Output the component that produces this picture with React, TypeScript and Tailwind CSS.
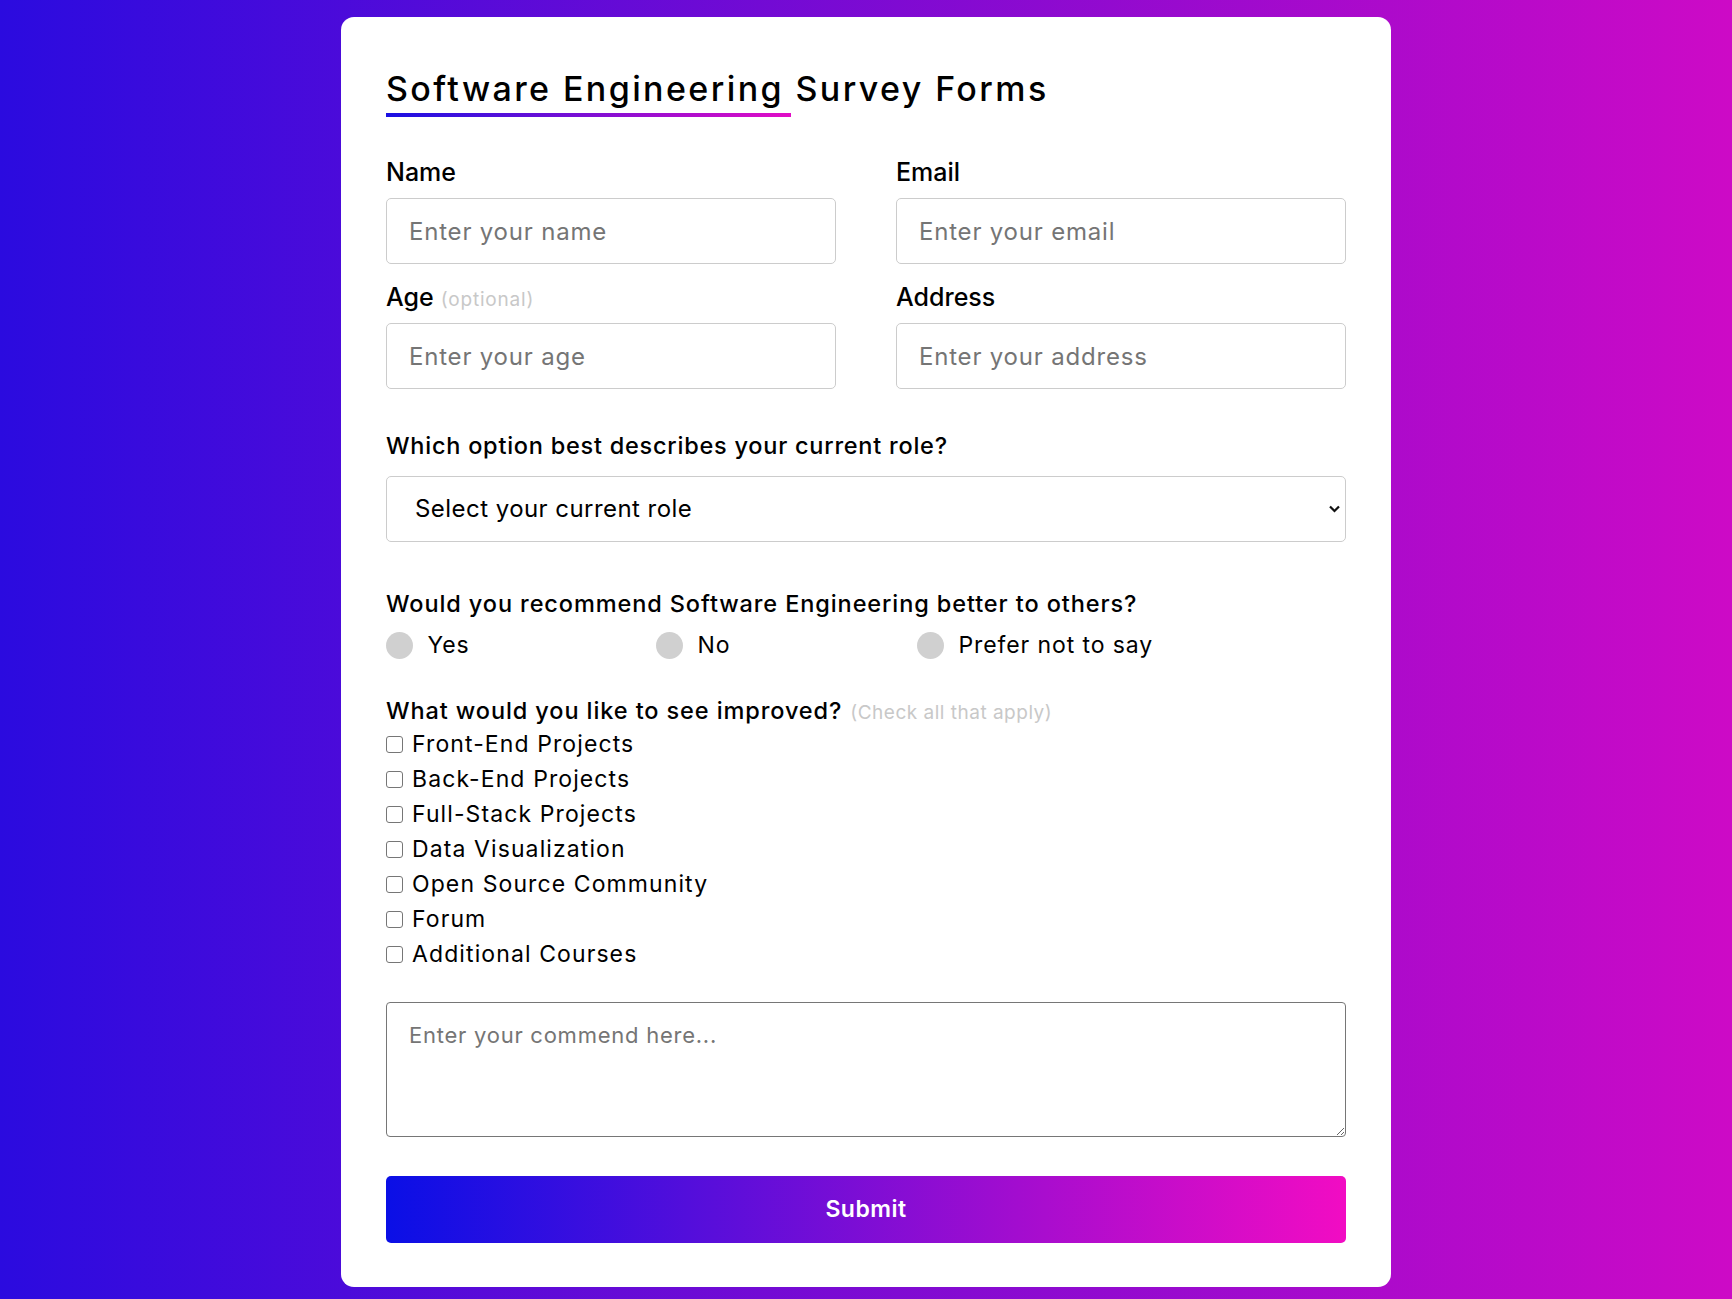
import React from 'react';

const improvements = [
  'Front-End Projects',
  'Back-End Projects',
  'Full-Stack Projects',
  'Data Visualization',
  'Open Source Community',
  'Forum',
  'Additional Courses',
];

const recommendOptions = [
  { value: 'yes', label: 'Yes', width: 'w-[270px]' },
  { value: 'no', label: 'No', width: 'w-[261px]' },
  { value: 'prefer-not', label: 'Prefer not to say', width: '' },
];

type FieldProps = {
  label: string;
  hint?: string;
  placeholder: string;
  type?: string;
};

function Field({ label, hint, placeholder, type = 'text' }: FieldProps) {
  return (
    <div>
      <label className="block mb-[13px] text-[25px] leading-[25px] font-medium text-black">
        {label}
        {hint && (
          <span className="ml-[7px] text-[19px] leading-none tracking-[0.8px] font-normal text-[#c8c8c8]">
            ({hint})
          </span>
        )}
      </label>
      <input
        type={type}
        placeholder={placeholder}
        className="block w-full h-[66px] px-[22px] rounded-[5px] border border-[#cccccc] bg-white text-[24px] tracking-[0.8px] text-black placeholder:text-[#757575] outline-none"
      />
    </div>
  );
}

export default function App() {
  return (
    <div className="min-h-screen pt-[17px] pb-[12px] bg-[linear-gradient(to_right,#2b0bdf,#cd0ac6)] font-['Inter',sans-serif]">
      <form
        onSubmit={(e) => e.preventDefault()}
        className="mx-auto w-[1050px] rounded-[13px] bg-white px-[45px] pt-[55px] pb-[44px]"
      >
        <h1 className="text-[34px] leading-[34px] tracking-[2.4px] font-medium text-black">
          Software Engineering Survey Forms
        </h1>
        <div className="mt-[7px] h-[4px] w-[405px] bg-[linear-gradient(to_right,#1a10e2,#e20cc6)]" />

        <div className="mt-[43px] grid grid-cols-2 gap-x-[60px] gap-y-[21px]">
          <Field label="Name" placeholder="Enter your name" />
          <Field label="Email" placeholder="Enter your email" type="email" />
          <Field label="Age" hint="optional" placeholder="Enter your age" type="number" />
          <Field label="Address" placeholder="Enter your address" />
        </div>

        {/* role */}
        <div className="mt-[45px]">
          <label className="block text-[23.5px] leading-[23.5px] tracking-[0.76px] font-medium text-black">
            Which option best describes your current role?
          </label>
          <div className="relative mt-[18px]">
            <select
              defaultValue=""
              className="block w-full h-[66px] appearance-none rounded-[5px] border border-[#cccccc] bg-white pl-[28px] pr-[40px] text-[24px] tracking-[0.45px] text-black outline-none"
            >
              <option value="" disabled>
                Select your current role
              </option>
              <option value="student">Student</option>
              <option value="full-time-job">Full Time Job</option>
              <option value="full-time-learner">Full Time Learner</option>
              <option value="other">Other</option>
            </select>
            <svg
              className="pointer-events-none absolute right-[6px] top-[29px] w-[11px] h-[8px]"
              viewBox="0 0 11 8"
              fill="none"
            >
              <path d="M1 1.5 L5.5 6 L10 1.5" stroke="#111" strokeWidth="2.2" />
            </svg>
          </div>
        </div>

        {/* recommend */}
        <div className="mt-[50px]">
          <p className="text-[23.5px] leading-[23.5px] tracking-[0.9px] font-medium text-black">
            Would you recommend Software Engineering better to others?
          </p>
          <div className="mt-[17px] flex">
            {recommendOptions.map((opt) => (
              <label key={opt.value} className={`flex h-[27px] items-center ${opt.width}`}>
                <input
                  type="radio"
                  name="recommend"
                  value={opt.value}
                  className="h-[26.5px] w-[26.5px] shrink-0 appearance-none rounded-full bg-[#d0d0d0]"
                />
                <span className="ml-[15px] text-[23px] leading-[27px] tracking-[0.9px] text-black">
                  {opt.label}
                </span>
              </label>
            ))}
          </div>
        </div>

        {/* improvements */}
        <div className="mt-[40px]">
          <p className="text-[23.5px] leading-[23.5px] tracking-[0.9px] font-medium text-black">
            What would you like to see improved?
            <span className="ml-[8px] text-[19px] leading-none tracking-[0.5px] font-normal text-[#c8c8c8]">
              (Check all that apply)
            </span>
          </p>
          <div className="mt-[4px]">
            {improvements.map((item) => (
              <label key={item} className="flex h-[35px] items-center">
                <input
                  type="checkbox"
                  value={item}
                  className="h-[17px] w-[17px] shrink-0 appearance-none rounded-[3px] border-[1.5px] border-[#767676] bg-white"
                />
                <span className="ml-[9px] text-[23px] leading-[35px] tracking-[1.1px] text-black">{item}</span>
              </label>
            ))}
          </div>
        </div>

        <textarea
          placeholder="Enter your commend here..."
          className="mt-[30px] block h-[135px] w-full rounded-[4px] border border-[#767676] px-[22px] pt-[16px] text-[22px] tracking-[0.75px] leading-normal text-black placeholder:text-[#757575] outline-none"
        />

        <button
          type="submit"
          className="mt-[39px] block h-[67px] w-full rounded-[5px] bg-[linear-gradient(to_right,#0a0fe6,#f20cc3)] text-[23px] tracking-[0.5px] font-semibold text-white"
        >
          Submit
        </button>
      </form>
    </div>
  );
}
